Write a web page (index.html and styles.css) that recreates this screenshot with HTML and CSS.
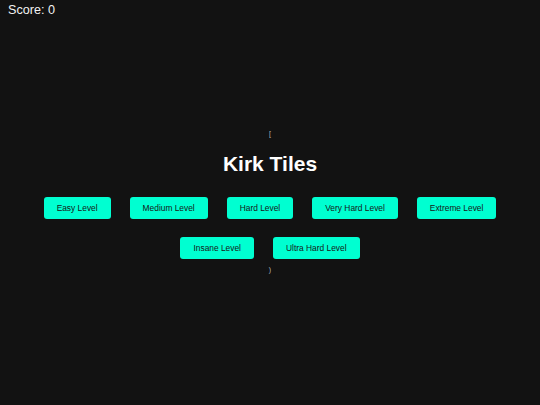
FILE: index.html
```html
<!DOCTYPE html>
<html>
<head>
<meta charset="utf-8">
<link rel="stylesheet" href="styles.css">
</head>
<body>
<div class="score">Score: 0</div>
<main class="menu">
  <div class="bracket">[</div>
  <h1 class="title">Kirk Tiles</h1>
  <div class="levels">
    <button class="level">Easy Level</button>
    <button class="level">Medium Level</button>
    <button class="level">Hard Level</button>
    <button class="level">Very Hard Level</button>
    <button class="level">Extreme Level</button>
    <button class="level">Insane Level</button>
    <button class="level">Ultra Hard Level</button>
  </div>
  <div class="bracket">)</div>
</main>
</body>
</html>
```
FILE: styles.css
```css
html, body {
  margin: 0;
  padding: 0;
  height: 100%;
}
body {
  background: #121212;
  font-family: "Liberation Sans", Arial, sans-serif;
  color: #fff;
  display: flex;
  align-items: center;
  justify-content: center;
}
.score {
  position: absolute;
  top: 3px;
  left: 8px;
  font-size: 12.6px;
  line-height: 15px;
  color: #f2f2f2;
}
.menu {
  display: flex;
  flex-direction: column;
  align-items: center;
  margin-bottom: 1px;
}
.bracket {
  font-size: 7px;
  line-height: 8px;
  color: #bbb;
}
.title {
  margin: 14px 0 21px;
  font-size: 21px;
  line-height: 24px;
  font-weight: bold;
}
.levels {
  width: 480px;
  display: flex;
  flex-wrap: wrap;
  justify-content: center;
  gap: 18px 19px;
  margin-bottom: 7px;
}
.level {
  height: 22px;
  padding: 0 13px;
  border: none;
  border-radius: 3px;
  background: #00ffd1;
  color: #161616;
  font-family: "Liberation Sans", Arial, sans-serif;
  font-size: 8.4px;
}
```
